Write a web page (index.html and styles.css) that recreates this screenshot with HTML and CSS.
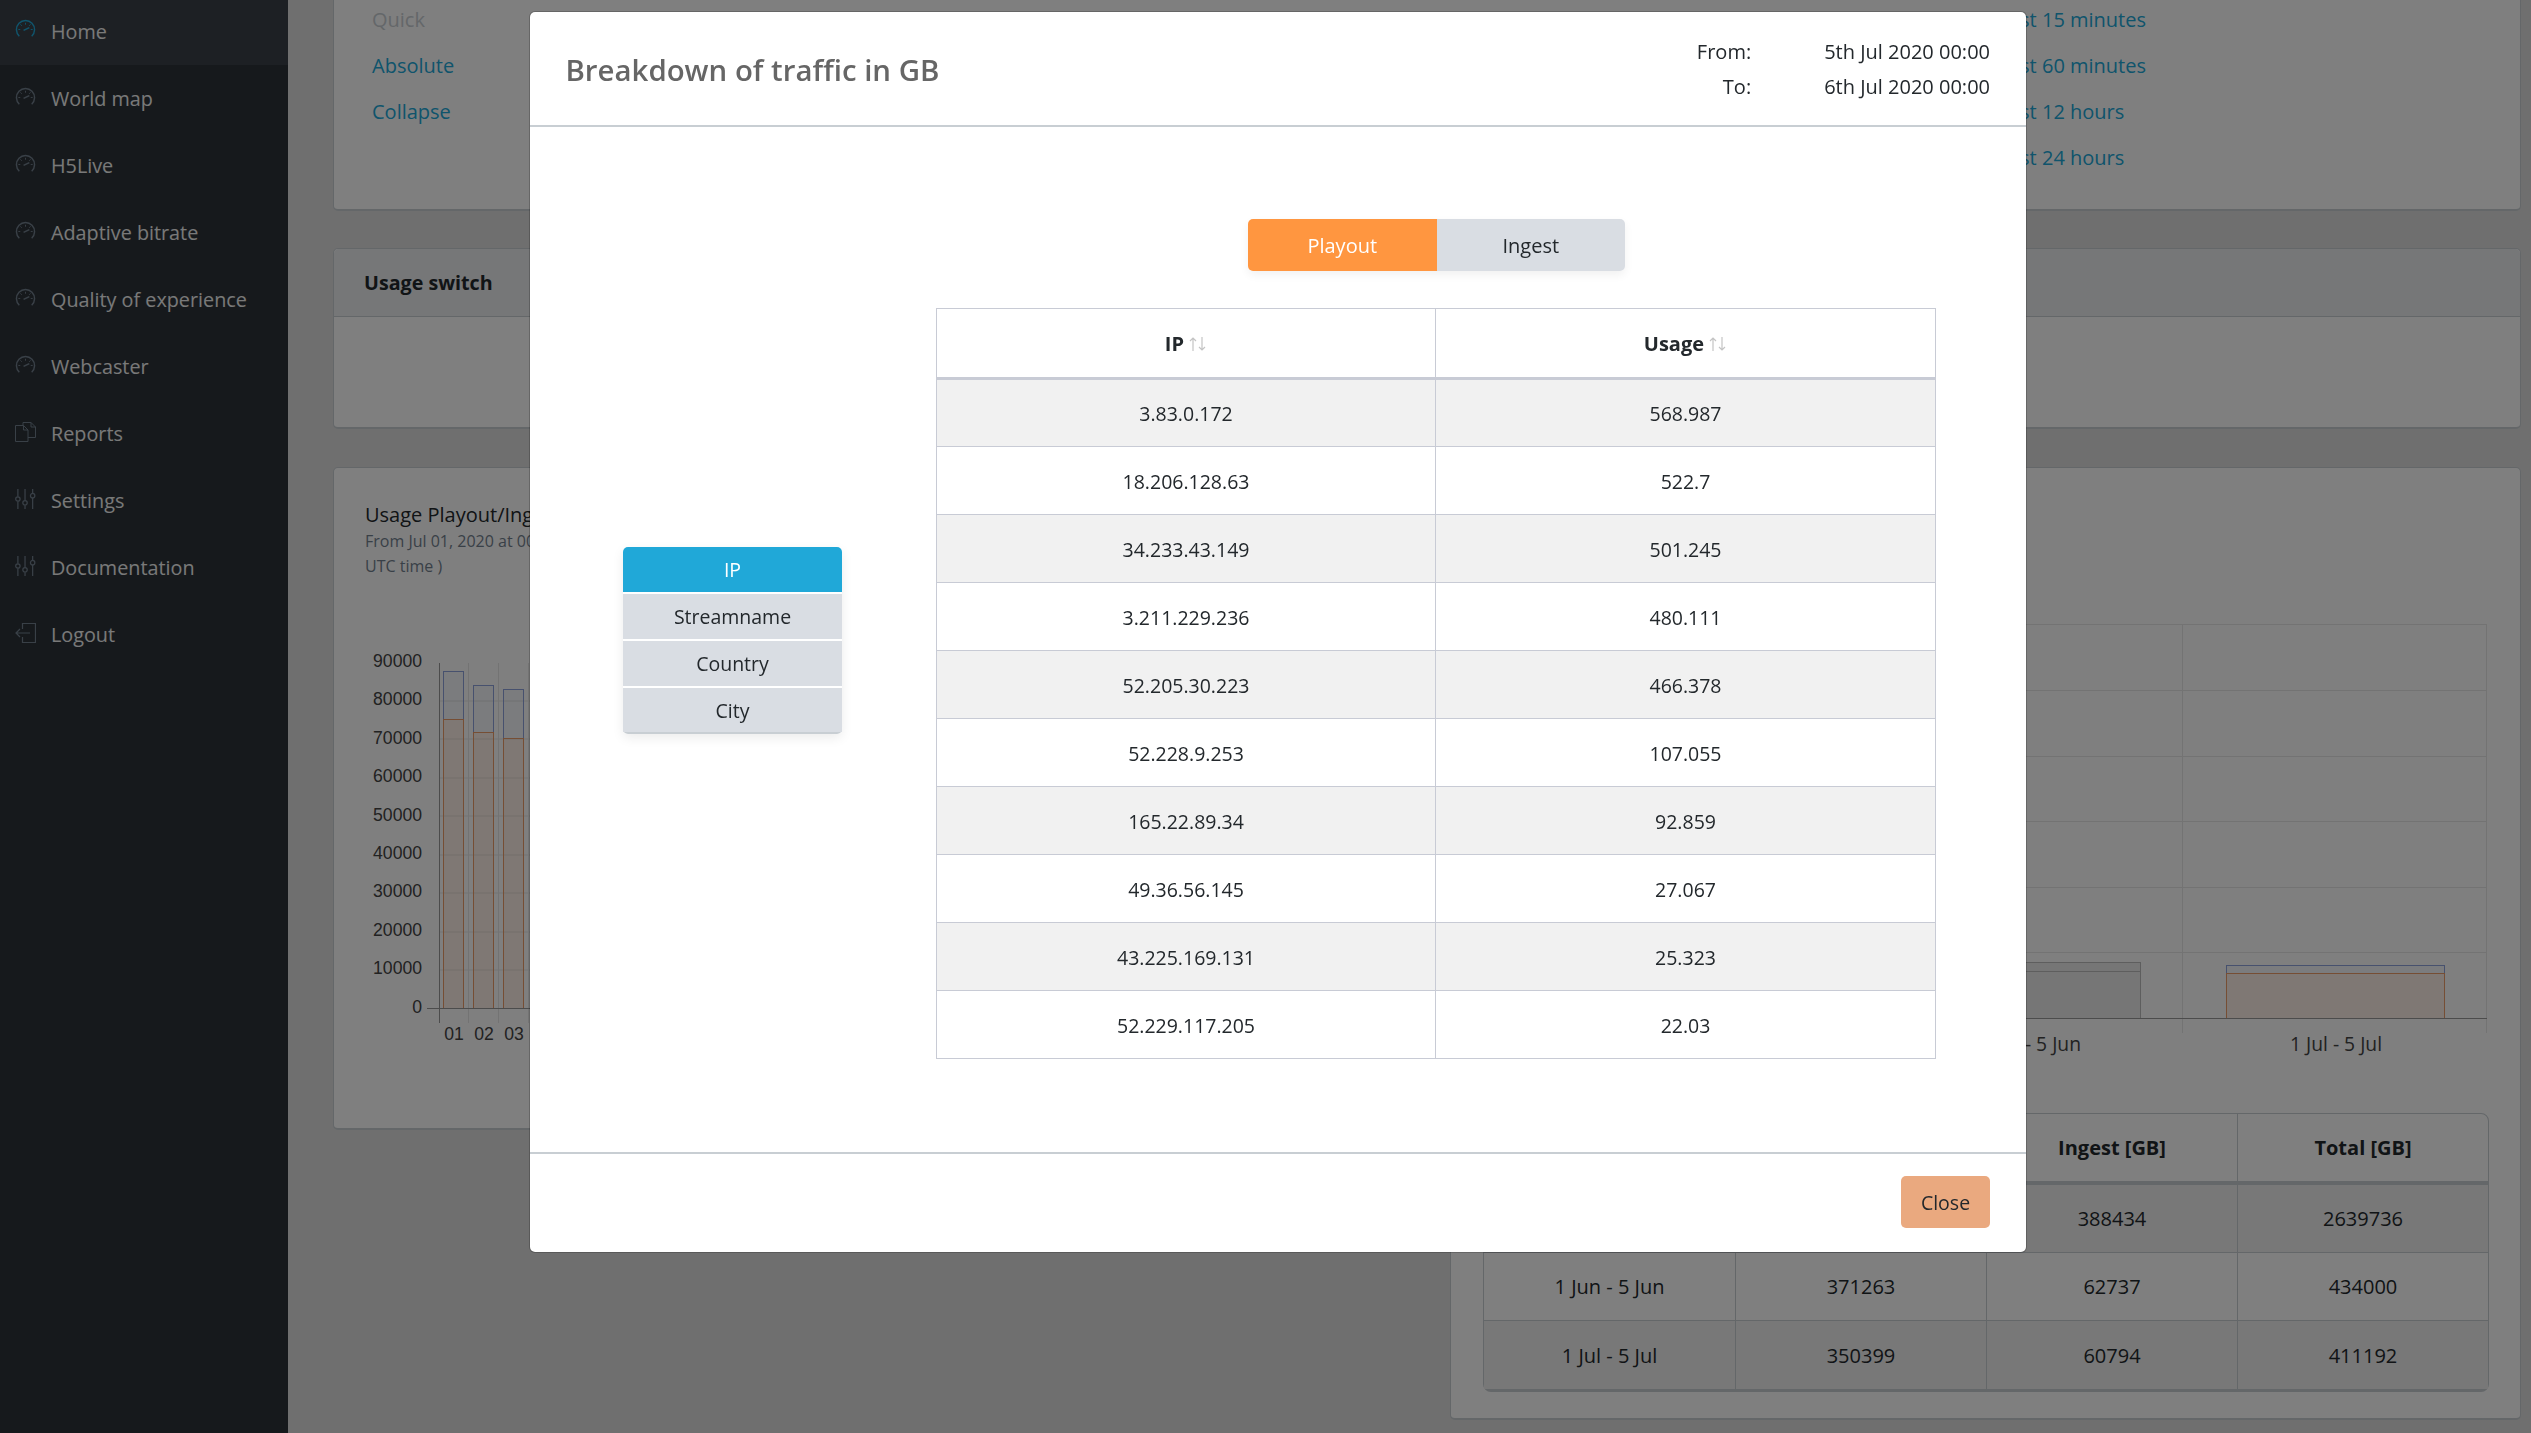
FILE: index.html
```html
<!DOCTYPE html>
<html>

<head>
    <meta charset="utf-8">
    <title>Usage</title>
    <link rel="stylesheet" href="styles.css">
</head>

<body>
    <svg class="defs">
        <symbol id="i-speed" viewBox="0 0 22 20">
            <path d="M4.500 17.500A9.500 9.500 0 1 1 17.500 17.500" fill="none" stroke="currentColor" stroke-width="1.500" />
            <path d="M11 3.500v2M3.500 10.500h2M16.500 10.500h2M5.700 5.200l1.400 1.400M16.300 5.200l-1.400 1.400" fill="none" stroke="currentColor" />
            <path d="M9 11.500l6-3" fill="none" stroke="currentColor" stroke-width="1.500" />
        </symbol>
        <symbol id="i-docs" viewBox="0 0 21 20">
            <path d="M.5 3.500h8l4.500 4.500v11.500H.5zM8.500 3.500V8H13" fill="none" stroke="currentColor" />
            <path d="M8 3.500V.5h8l4.500 4.500v10.500H13M16 .5V5h4.500" fill="none" stroke="currentColor" />
        </symbol>
        <symbol id="i-sliders" viewBox="0 0 21 21">
            <path d="M2.500 0v8M2.500 13v8M10 0v12M10 17v4M18 0v4.500M18 9.500V21" fill="none" stroke="currentColor" stroke-width="1.300" />
            <circle cx="2.500" cy="10.500" r="2.300" fill="none" stroke="currentColor" stroke-width="1.300" />
            <circle cx="10" cy="14.500" r="2.300" fill="none" stroke="currentColor" stroke-width="1.300" />
            <circle cx="18" cy="7" r="2.300" fill="none" stroke="currentColor" stroke-width="1.300" />
        </symbol>
        <symbol id="i-logout" viewBox="0 0 21 20">
            <path d="M7.500 6V.5h13v19h-13v-5.500M1 10h14M5 6l-4 4 4 4" fill="none" stroke="currentColor" stroke-width="1.200" />
        </symbol>
        <symbol id="i-sort" viewBox="0 0 18 14">
            <path d="M4 14V1M1 4l3-3 3 3M13 0v13M10 10l3 3 3-3" fill="none" stroke="currentColor" stroke-width="1.200" />
        </symbol>
    </svg>

    <div class="app">
        <nav class="sidebar">
            <a class="nav-item active"><svg class="nav-icon"><use href="#i-speed" /></svg>Home</a>
            <a class="nav-item"><svg class="nav-icon"><use href="#i-speed" /></svg>World map</a>
            <a class="nav-item"><svg class="nav-icon"><use href="#i-speed" /></svg>H5Live</a>
            <a class="nav-item"><svg class="nav-icon"><use href="#i-speed" /></svg>Adaptive bitrate</a>
            <a class="nav-item"><svg class="nav-icon"><use href="#i-speed" /></svg>Quality of experience</a>
            <a class="nav-item"><svg class="nav-icon"><use href="#i-speed" /></svg>Webcaster</a>
            <a class="nav-item"><svg class="nav-icon"><use href="#i-docs" /></svg>Reports</a>
            <a class="nav-item"><svg class="nav-icon"><use href="#i-sliders" /></svg>Settings</a>
            <a class="nav-item"><svg class="nav-icon"><use href="#i-sliders" /></svg>Documentation</a>
            <a class="nav-item"><svg class="nav-icon"><use href="#i-logout" /></svg>Logout</a>
        </nav>

        <main class="content">
            <section class="card range-card">
                <div class="range-col">
                    <span class="range-off">Quick</span>
                    <a class="range-link">Absolute</a>
                    <a class="range-link">Collapse</a>
                </div>
                <div class="range-col">
                    <a class="range-link">Last 15 minutes</a>
                    <a class="range-link">Last 60 minutes</a>
                    <a class="range-link">Last 12 hours</a>
                    <a class="range-link">Last 24 hours</a>
                </div>
            </section>

            <section class="card switch-card">
                <div class="card-header">Usage switch</div>
            </section>

            <div class="chart-row">
                <section class="card daily-card">
                    <div class="chart-title">Usage Playout/Ingest</div>
                    <div class="chart-sub">From Jul 01, 2020 at 00:00<br>UTC time )</div>
                    <svg class="daily-chart" width="400" height="430">
                        <g class="grid">
                            <path d="M74 102H400M74 140H400M74 179H400M74 217H400M74 256H400M74 294H400M74 333H400M74 371H400" />
                            <path d="M103.500 64V424M133.500 64V424M163.500 64V424" />
                        </g>
                        <rect class="bar-in" x="78.500" y="72.500" width="20" height="48" />
                        <rect class="bar-out" x="78.500" y="120.500" width="20" height="289" />
                        <rect class="bar-in" x="108.500" y="86.500" width="20" height="47" />
                        <rect class="bar-out" x="108.500" y="133.500" width="20" height="276" />
                        <rect class="bar-in" x="138.500" y="90.500" width="20" height="49" />
                        <rect class="bar-out" x="138.500" y="139.500" width="20" height="270" />
                        <path class="axis" d="M74.500 64V424M62 409.500H400" />
                        <g class="tick-y">
                            <text x="57" y="68">90000</text>
                            <text x="57" y="106">80000</text>
                            <text x="57" y="145">70000</text>
                            <text x="57" y="183">60000</text>
                            <text x="57" y="222">50000</text>
                            <text x="57" y="260">40000</text>
                            <text x="57" y="298">30000</text>
                            <text x="57" y="337">20000</text>
                            <text x="57" y="375">10000</text>
                            <text x="57" y="414">0</text>
                        </g>
                    </svg>
                    <div class="day-labels"><span>01</span><span>02</span><span>03</span></div>
                </section>

                <section class="card monthly-card">
                    <svg class="monthly-chart" width="1006" height="434">
                        <g class="grid">
                            <path d="M0 .5H1004M0 66.500H1004M0 132.500H1004M0 197.500H1004M0 263.500H1004M0 328.500H1004" />
                            <path d="M394.500 0V409M699.500 0V409M1003.500 0V409" />
                        </g>
                        <rect class="bar-dim" x="448.500" y="338.500" width="209" height="9" />
                        <rect class="bar-dim" x="448.500" y="347.500" width="209" height="47" />
                        <rect class="bar-in" x="743.500" y="341.500" width="218" height="8" />
                        <rect class="bar-out" x="743.500" y="349.500" width="218" height="45" />
                        <path class="axis" d="M0 394.500H1004" />
                        <text class="tick-x" x="545" y="427">1 Jun - 5 Jun</text>
                        <text class="tick-x" x="853" y="427">1 Jul - 5 Jul</text>
                    </svg>
                    <table class="usage-table">
                        <thead>
                            <tr>
                                <th>Period</th>
                                <th>Playout [GB]</th>
                                <th>Ingest [GB]</th>
                                <th>Total [GB]</th>
                            </tr>
                        </thead>
                        <tbody>
                            <tr>
                                <td>1 May - 5 May</td>
                                <td>2251302</td>
                                <td>388434</td>
                                <td>2639736</td>
                            </tr>
                            <tr>
                                <td>1 Jun - 5 Jun</td>
                                <td>371263</td>
                                <td>62737</td>
                                <td>434000</td>
                            </tr>
                            <tr>
                                <td>1 Jul - 5 Jul</td>
                                <td>350399</td>
                                <td>60794</td>
                                <td>411192</td>
                            </tr>
                        </tbody>
                    </table>
                </section>
            </div>
        </main>
    </div>

    <div class="backdrop"></div>

    <div class="modal">
        <header class="modal-header">
            <h2 class="modal-title">Breakdown of traffic in GB</h2>
            <dl class="modal-dates">
                <dt>From:</dt>
                <dd>5th Jul 2020 00:00</dd>
                <dt>To:</dt>
                <dd>6th Jul 2020 00:00</dd>
            </dl>
        </header>
        <div class="modal-body">
            <div class="toggle">
                <button class="toggle-btn on">Playout</button>
                <button class="toggle-btn">Ingest</button>
            </div>
            <div class="breakdown">
                <div class="group">
                    <button class="group-btn on">IP</button>
                    <button class="group-btn">Streamname</button>
                    <button class="group-btn">Country</button>
                    <button class="group-btn">City</button>
                </div>
                <table class="traffic-table">
                    <thead>
                        <tr>
                            <th>IP <svg class="sort"><use href="#i-sort" /></svg></th>
                            <th>Usage <svg class="sort"><use href="#i-sort" /></svg></th>
                        </tr>
                    </thead>
                    <tbody>
                        <tr><td>3.83.0.172</td><td>568.987</td></tr>
                        <tr><td>18.206.128.63</td><td>522.7</td></tr>
                        <tr><td>34.233.43.149</td><td>501.245</td></tr>
                        <tr><td>3.211.229.236</td><td>480.111</td></tr>
                        <tr><td>52.205.30.223</td><td>466.378</td></tr>
                        <tr><td>52.228.9.253</td><td>107.055</td></tr>
                        <tr><td>165.22.89.34</td><td>92.859</td></tr>
                        <tr><td>49.36.56.145</td><td>27.067</td></tr>
                        <tr><td>43.225.169.131</td><td>25.323</td></tr>
                        <tr><td>52.229.117.205</td><td>22.03</td></tr>
                    </tbody>
                </table>
            </div>
        </div>
        <footer class="modal-footer">
            <button class="close-btn">Close</button>
        </footer>
    </div>
</body>

</html>
```

FILE: styles.css
```css
* {
    box-sizing: border-box;
}

html,
body {
    height: 100%;
}

body {
    margin: 0;
    overflow: hidden;
    background: #dedede;
    color: #23282c;
    font-family: "Open Sans", "Noto Sans", sans-serif;
    font-size: 20px;
}

.defs {
    display: none;
}

.app {
    display: flex;
    height: 100%;
}

/* sidebar */
.sidebar {
    flex: 0 0 288px;
    margin-top: -2px;
    background: #2d3339;
    font-size: 19.800px;
}

.nav-item {
    display: flex;
    align-items: center;
    gap: 15px;
    height: 67px;
    padding-left: 15px;
    color: #f2f2f2;
}

.nav-item.active {
    margin-top: -1px;
    height: 68px;
    background: #3a4149;
}

.nav-icon {
    width: 21px;
    height: 20px;
    margin-top: -4px;
    color: #73818f;
}

.active .nav-icon {
    color: #20a8d8;
}

/* page behind the modal */
.content {
    flex: 1;
    min-width: 0;
    padding: 0 10px 0 45px;
    margin-top: -20px;
}

.card {
    background: #fff;
    border: 1px solid #c8ced3;
    border-radius: 5px;
    border-bottom-width: 2px;
}

.range-card {
    display: flex;
    justify-content: space-between;
    height: 231px;
    padding: 26px 374px 0 38px;
}

.range-col {
    display: flex;
    flex-direction: column;
    gap: 20px;
    line-height: 26px;
}

.range-off {
    color: #c8ced3;
}

.range-link {
    color: #20a8d8;
}

.switch-card {
    height: 181px;
    margin-top: 37px;
}

.card-header {
    height: 68px;
    padding: 0 30px;
    background: #eceef1;
    border-bottom: 1px solid #c8ced3;
    border-radius: 5px 5px 0 0;
    font-size: 19.700px;
    font-weight: 700;
    line-height: 68px;
}

.chart-row {
    display: flex;
    gap: 20px;
    margin-top: 38px;
}

.daily-card {
    flex: 1;
    height: 663px;
    padding: 32px 30px 0 31px;
}

.chart-title {
    line-height: 29px;
}

.chart-sub {
    color: #73818f;
    font-size: 16px;
    line-height: 25px;
}

.daily-chart {
    display: block;
    margin: 20px 0 0;
}

.day-labels {
    display: flex;
    margin: -5px 0 0 74px;
    color: #444;
    font-family: "Liberation Sans", sans-serif;
    font-size: 17.600px;
}

.day-labels span {
    width: 30px;
    text-align: center;
}

.grid path {
    fill: none;
    stroke: #e6e6e6;
}

.axis {
    fill: none;
    stroke: #999;
    stroke-width: 1px;
}

.bar-in {
    fill: rgba(100, 130, 200, .05);
    stroke: #8ea2dc;
}

.bar-out {
    fill: rgba(245, 160, 110, .15);
    stroke: #ec9c68;
}

.bar-dim {
    fill: #ececec;
    stroke: #bdbdbd;
}

.tick-y text {
    fill: #444;
    font-family: "Liberation Sans", sans-serif;
    font-size: 17.600px;
    text-anchor: end;
}

.tick-x {
    fill: #444;
    font-size: 19.300px;
    text-anchor: middle;
}

.monthly-card {
    flex: 0 0 1071px;
    height: 953px;
    padding: 156px 31px 0 32px;
}

.monthly-chart {
    display: block;
}

.usage-table {
    width: 1006px;
    margin-top: 55px;
    border-collapse: separate;
    border-spacing: 0;
    border: 1px solid #c8ced3;
    border-bottom-width: 3px;
    border-radius: 8px;
    table-layout: fixed;
    text-align: center;
}

.usage-table th {
    height: 71px;
    border-bottom: 4px solid #c8ced3;
    border-left: 1px solid #c8ced3;
}

.usage-table td {
    height: 68px;
    border-left: 1px solid #c8ced3;
    border-bottom: 1px solid #c8ced3;
}

.usage-table tr :first-child {
    border-left: 0;
}

.usage-table tbody tr:nth-child(odd) {
    background: #f0f0f0;
}

.usage-table tbody tr:last-child td {
    border-bottom: 0;
}

.backdrop {
    position: fixed;
    inset: 0;
    background: rgba(0, 0, 0, .5);
}

/* modal */
.modal {
    position: fixed;
    top: 11px;
    left: 529px;
    display: flex;
    flex-direction: column;
    width: 1498px;
    height: 1242px;
    background: #fff;
    background-clip: padding-box;
    border: 1px solid rgba(0, 0, 0, .2);
    border-radius: 6px;
}

.modal-header {
    display: flex;
    align-items: center;
    justify-content: space-between;
    flex: 0 0 115px;
    padding: 1px 36px 0 35.500px;
    border-bottom: 2px solid #c8ced3;
}

.modal-title {
    margin: 2px 0 0;
    color: #666;
    font-size: 29.400px;
    font-weight: 600;
}

.modal-dates {
    display: grid;
    grid-template-columns: auto auto;
    gap: 0 73px;
    margin: 0;
    line-height: 35px;
}

.modal-dates dt {
    text-align: right;
}

.modal-dates dd {
    margin: 0;
}

.modal-body {
    flex: 1;
    padding: 92px 90px 0 93px;
}

.toggle {
    display: flex;
    width: 377px;
    margin: 0 auto 0 625px;
    border-radius: 5px;
    box-shadow: 0 4px 10px rgba(0, 0, 0, .06);
}

.toggle-btn {
    flex: 1;
    height: 52px;
    border: 0;
    background: #d9dde3;
    color: #23282c;
    font: inherit;
}

.toggle-btn:first-child {
    border-radius: 5px 0 0 5px;
}

.toggle-btn:last-child {
    border-radius: 0 5px 5px 0;
}

.toggle-btn.on {
    background: #ff9640;
    color: #fff;
}

.breakdown {
    display: flex;
    align-items: flex-start;
    gap: 94px;
    margin-top: 37px;
}

.group {
    display: flex;
    flex-direction: column;
    gap: 2px;
    flex: 0 0 219px;
    margin-top: 239px;
    border-radius: 5px;
    box-shadow: 0 4px 12px rgba(0, 0, 0, .08);
    border-bottom: 2px solid #c8ced3;
}

.group-btn {
    height: 45px;
    border: 0;
    background: #d9dde3;
    color: #23282c;
    font: inherit;
    font-size: 19.500px;
}

.group-btn:last-child {
    height: 44px;
}

.group-btn.on {
    background: #20a8d8;
    border-radius: 5px 5px 0 0;
    color: #fff;
}

.traffic-table {
    width: 1000px;
    border-collapse: collapse;
    table-layout: fixed;
    text-align: center;
    font-size: 19.500px;
}

.traffic-table th,
.traffic-table td {
    border: 1px solid #c8cbd5;
}

.traffic-table th {
    height: 70px;
    border-bottom: 3px solid #c8cbd5;
    font-size: 20px;
    font-weight: 700;
}

.traffic-table th:first-child {
    width: 499px;
}

.traffic-table td {
    height: 68px;
    padding: 1px 0 0;
}

.traffic-table tbody tr:nth-child(odd) {
    background: #f1f1f1;
}

.sort {
    width: 18px;
    height: 14px;
    color: #c4c4c4;
}

.modal-footer {
    display: flex;
    justify-content: flex-end;
    align-items: flex-start;
    flex: 0 0 100px;
    padding: 22px 36px 0;
    border-top: 2px solid #c8ced3;
}

.close-btn {
    width: 89px;
    height: 52px;
    border: 0;
    border-radius: 5px;
    background: #eaa97f;
    color: #23282c;
    font: inherit;
    font-size: 19.500px;
}
```
